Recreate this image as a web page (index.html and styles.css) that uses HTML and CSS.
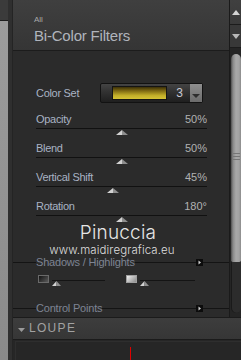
FILE: index.html
```html
<!DOCTYPE html>
<html>
<head>
<meta charset="utf-8">
<link rel="stylesheet" href="styles.css">
</head>
<body>
<div class="app">
  <div class="side"><div class="side-top"></div><div class="side-rest"></div></div>
  <div class="gutter"></div>
  <div class="col">
    <div class="upper">
      <div class="main">
        <header class="head">
          <div class="crumb">All</div>
          <div class="title">Bi-Color Filters</div>
        </header>
        <section class="body">
          <div class="cs-row">
            <span class="label">Color Set</span>
            <div class="cs-ctl">
              <span class="swatch"></span>
              <span class="cs-num">3</span>
              <span class="cs-drop"><svg width="8" height="4" viewBox="0 0 8 4"><polygon points="0,0 8,0 4,4" fill="#2e2e2e"/></svg></span>
            </div>
          </div>

          <div class="slider">
            <div class="s-head"><span class="label">Opacity</span><span class="val">50%</span></div>
            <div class="s-track"><svg class="thumb" style="left:50%" width="12" height="5" viewBox="0 0 12 5"><polygon points="0,5 6,0 6,5" fill="#d2d2d2"/><polygon points="6,0 12,5 6,5" fill="#8e8e8e"/></svg></div>
          </div>
          <div class="slider">
            <div class="s-head"><span class="label">Blend</span><span class="val">50%</span></div>
            <div class="s-track"><svg class="thumb" style="left:50%" width="12" height="5" viewBox="0 0 12 5"><polygon points="0,5 6,0 6,5" fill="#d2d2d2"/><polygon points="6,0 12,5 6,5" fill="#8e8e8e"/></svg></div>
          </div>
          <div class="slider">
            <div class="s-head"><span class="label">Vertical Shift</span><span class="val">45%</span></div>
            <div class="s-track"><svg class="thumb" style="left:45%" width="12" height="5" viewBox="0 0 12 5"><polygon points="0,5 6,0 6,5" fill="#d2d2d2"/><polygon points="6,0 12,5 6,5" fill="#8e8e8e"/></svg></div>
          </div>
          <div class="slider">
            <div class="s-head"><span class="label">Rotation</span><span class="val">180°</span></div>
            <div class="s-track"><svg class="thumb" style="left:50%" width="12" height="5" viewBox="0 0 12 5"><polygon points="0,5 6,0 6,5" fill="#d2d2d2"/><polygon points="6,0 12,5 6,5" fill="#8e8e8e"/></svg></div>
          </div>

          <div class="mark">
            <div class="mark-name">Pinuccia</div>
            <div class="mark-url">www.maidiregrafica.eu</div>
          </div>

          <div class="sect">
            <span class="seg seg-l"></span>
            <span class="sect-t">Shadows / Highlights</span>
            <span class="seg seg-f"></span>
            <span class="sbtn"><svg width="7" height="7" viewBox="0 0 7 7"><rect width="7" height="7" fill="#0c0c0c"/><polygon points="2.5,1.5 5,3.5 2.5,5.5" fill="#d0d0d0"/></svg></span>
            <span class="seg seg-r"></span>
          </div>

          <div class="sh-row">
            <div class="sh-grp g1">
              <span class="sw sw-dark"></span>
              <div class="mini m1"><svg class="mthumb" width="9" height="5" viewBox="0 0 9 5"><polygon points="0,5 4.5,0 4.5,5" fill="#d2d2d2"/><polygon points="4.5,0 9,5 4.5,5" fill="#8e8e8e"/></svg></div>
            </div>
            <div class="sh-grp g2">
              <span class="sw sw-light"></span>
              <div class="mini m2"><svg class="mthumb" width="9" height="5" viewBox="0 0 9 5"><polygon points="0,5 4.5,0 4.5,5" fill="#d2d2d2"/><polygon points="4.5,0 9,5 4.5,5" fill="#8e8e8e"/></svg></div>
            </div>
          </div>

          <div class="sect sect-cp">
            <span class="seg seg-l"></span>
            <span class="sect-t">Control Points</span>
            <span class="seg seg-f"></span>
            <span class="sbtn"><svg width="7" height="7" viewBox="0 0 7 7"><rect width="7" height="7" fill="#0c0c0c"/><polygon points="2.5,1.5 5,3.5 2.5,5.5" fill="#d0d0d0"/></svg></span>
            <span class="seg seg-r"></span>
          </div>
        </section>
      </div>
      <div class="scroll">
        <div class="sb-btn sb-up"><svg width="8" height="5" viewBox="0 0 8 5"><polygon points="0,5 4,0 8,5" fill="#d4d4d4"/></svg></div>
        <div class="sb-btn sb-down"><svg width="8" height="5" viewBox="0 0 8 5"><polygon points="0,0 8,0 4,5" fill="#b8b8b8"/></svg></div>
        <div class="sb-track">
          <div class="sb-rail">
            <div class="sb-thumb"><span class="grip"></span></div>
          </div>
        </div>
      </div>
    </div>
    <div class="loupe-head">
      <svg width="7" height="4" viewBox="0 0 7 4"><polygon points="0,0 7,0 3.5,4" fill="#9a9a9a"/></svg>
      <span class="loupe-t">LOUPE</span>
    </div>
    <div class="loupe-body">
      <div class="loupe-box"><span class="red"></span></div>
    </div>
  </div>
</div>
</body>
</html>
```
FILE: styles.css
```css
html, body {
  margin: 0;
  padding: 0;
  background: #262626;
}
body {
  font-family: "Liberation Sans", Arial, sans-serif;
  width: 241px;
  height: 360px;
  overflow: hidden;
}
.app {
  display: flex;
  width: 241px;
  height: 360px;
}
.side {
  width: 8px;
  display: flex;
  flex-direction: column;
}
.side-top {
  height: 20px;
  background: #3b3b3b;
  border-bottom: 1px solid #1e1e1e;
}
.side-rest {
  flex: 1;
  background: linear-gradient(#9c9c9c, #8a8a8a);
}
.gutter {
  width: 4px;
  background: #2f2f2f;
  border-right: 1px solid #242424;
}
.col {
  width: 228px;
  display: flex;
  flex-direction: column;
}
.upper {
  height: 317px;
  display: flex;
}
.main {
  width: 216px;
  display: flex;
  flex-direction: column;
}
.head {
  border-bottom: 1px solid #1c1c1c;
  background: linear-gradient(#3f3f3f, #353535);
  padding: 15px 0 0 21px;
  box-sizing: border-box;
  height: 51px;
}
.crumb {
  font-size: 8px;
  line-height: 9px;
  color: #a8a8a8;
}
.title {
  margin-top: 3px;
  font-size: 15px;
  line-height: 17px;
  letter-spacing: -0.2px;
  color: #b0b4bc;
}
.body {
  flex: 1;
  background: #2b2b2b;
  padding: 32px 22px 0 23px;
  display: flex;
  flex-direction: column;
  overflow: hidden;
}
.label {
  font-size: 11px;
  line-height: 13px;
  letter-spacing: -0.3px;
  color: #a9b3c4;
}
.val {
  font-size: 11px;
  line-height: 13px;
  color: #b2b2b2;
}
.cs-row {
  display: flex;
  align-items: center;
  justify-content: space-between;
  height: 20px;
  margin-bottom: 10px;
}
.cs-ctl {
  margin-right: 4px;
  width: 103px;
  height: 20px;
  box-sizing: border-box;
  border: 1px solid #121212;
  border-radius: 2px;
  background: linear-gradient(#444 0, #333 40%, #1f1f1f 100%);
  display: flex;
  align-items: center;
  padding-left: 11px;
}
.swatch {
  width: 56px;
  height: 14px;
  box-sizing: border-box;
  border: 1px solid #141414;
  background: linear-gradient(#3a2f08 0, #7a6612 30%, #c2ae28 70%, #d4c236 100%);
}
.cs-num {
  margin-left: 9px;
  font-size: 12px;
  color: #c8cad4;
  width: 14px;
}
.cs-drop {
  margin-left: auto;
  width: 12px;
  height: 18px;
  background: linear-gradient(#8e8e8e, #6c6c6c);
  display: flex;
  align-items: flex-end;
  justify-content: center;
  padding-bottom: 4px;
  box-sizing: border-box;
}
.cs-drop svg {
  display: block;
}
.slider {
  display: flex;
  flex-direction: column;
}
.s-head {
  display: flex;
  justify-content: space-between;
  height: 13px;
}
.s-track {
  margin-top: 2px;
  height: 6px;
  border-top: 1px solid #111;
  position: relative;
  margin-bottom: 7px;
}
.thumb {
  position: absolute;
  top: 1px;
  margin-left: -6px;
  display: block;
}
.mark {
  margin-top: -7px;
  display: flex;
  flex-direction: column;
}
.mark-name {
  font-family: Inter, "Open Sans", sans-serif;
  font-weight: 300;
  font-size: 19px;
  line-height: 22px;
  letter-spacing: 0.2px;
  text-align: center;
  color: #e6e6e6;
  padding-right: 7px;
}
.mark-url {
  font-family: Inter, "Open Sans", sans-serif;
  font-weight: 300;
  margin-top: 1px;
  font-size: 11.5px;
  line-height: 11px;
  letter-spacing: 0.1px;
  text-align: center;
  color: #dedede;
  padding-right: 19px;
}
.sect {
  display: flex;
  align-items: center;
  height: 13px;
  margin-left: -23px;
  margin-right: -22px;
}
.seg {
  height: 1px;
  background: #141414;
}
.seg-l {
  width: 23px;
}
.seg-f {
  flex: 1;
}
.seg-r {
  width: 26px;
}
.sect-t {
  font-size: 11px;
  line-height: 13px;
  letter-spacing: -0.2px;
  color: #7e8493;
}
.sbtn {
  width: 7px;
  height: 7px;
}
.sbtn svg {
  display: block;
}
.sh-row {
  margin-top: 6px;
  height: 10px;
  display: flex;
}
.sh-grp {
  display: flex;
}
.g1 {
  margin-left: 2px;
}
.g2 {
  margin-left: 21px;
}
.sw {
  width: 11px;
  height: 8px;
  box-sizing: border-box;
  border: 1px solid #8a8a8a;
}
.sw-dark {
  background: linear-gradient(135deg, #141414, #5a5a5a);
  border-color: #6a6a6a;
}
.sw-light {
  background: linear-gradient(135deg, #f0f0f0, #8a8a8a);
  border-color: #a0a0a0;
}
.mini {
  position: relative;
  margin-left: 3px;
  height: 10px;
}
.mini::before {
  content: "";
  position: absolute;
  left: 0;
  right: 0;
  top: 5px;
  height: 1px;
  background: #141414;
}
.m1 {
  width: 53px;
}
.m2 {
  width: 55px;
}
.mthumb {
  position: absolute;
  left: 0;
  top: 6px;
  display: block;
}
.sect-cp {
  margin-top: 17px;
}
.scroll {
  width: 12px;
  box-sizing: border-box;
  border-left: 1px solid #1a1a1a;
  background: #252525;
  display: flex;
  flex-direction: column;
}
.sb-btn {
  display: flex;
  justify-content: center;
  border-bottom: 1px solid #1c1c1c;
  box-sizing: border-box;
}
.sb-btn svg {
  display: block;
}
.sb-up {
  height: 25px;
  background: linear-gradient(#404040, #3a3a3a);
  align-items: flex-start;
  padding-top: 10px;
}
.sb-down {
  height: 23px;
  background: #383838;
  align-items: flex-start;
  padding-top: 9px;
}
.sb-track {
  flex: 1;
  padding: 6px 0 4px 1px;
  display: flex;
  flex-direction: column;
}
.sb-rail {
  flex: 1;
  border-radius: 6px;
  background: #2c2c2c;
  box-shadow: inset 1px 0 0 #1a1a1a;
  display: flex;
  flex-direction: column;
}
.sb-thumb {
  height: 208px;
  border-radius: 6px 6px 2px 2px;
  background: linear-gradient(to right, #4e4e4e 0, #888 2px, #a8a8a8 5px, #a2a2a2 8px, #8c8c8c 10px);
  display: flex;
  justify-content: center;
  padding-top: 99px;
  box-sizing: border-box;
}
.grip {
  width: 7px;
  height: 7px;
  background: repeating-linear-gradient(#767676 0 1px, transparent 1px 3px);
}
.loupe-head {
  height: 23px;
  box-sizing: border-box;
  border-top: 1px solid #1b1b1b;
  border-bottom: 1px solid #1b1b1b;
  background: linear-gradient(#3d3d3d, #363636);
  display: flex;
  align-items: center;
  padding-left: 5px;
}
.loupe-head svg {
  display: block;
  margin-top: 2px;
}
.loupe-t {
  margin-left: 4px;
  font-size: 12px;
  line-height: 21px;
  letter-spacing: 1.3px;
  color: #a2a2a2;
}
.loupe-body {
  flex: 1;
  background: #262626;
  padding: 1px 0 0 2px;
  display: flex;
}
.loupe-box {
  flex: 1;
  border-left: 1px solid #2e2e2e;
  border-top: 1px solid #2e2e2e;
  padding: 5px 0 0 114px;
  display: flex;
}
.red {
  width: 1px;
  background: #e00000;
}
```
